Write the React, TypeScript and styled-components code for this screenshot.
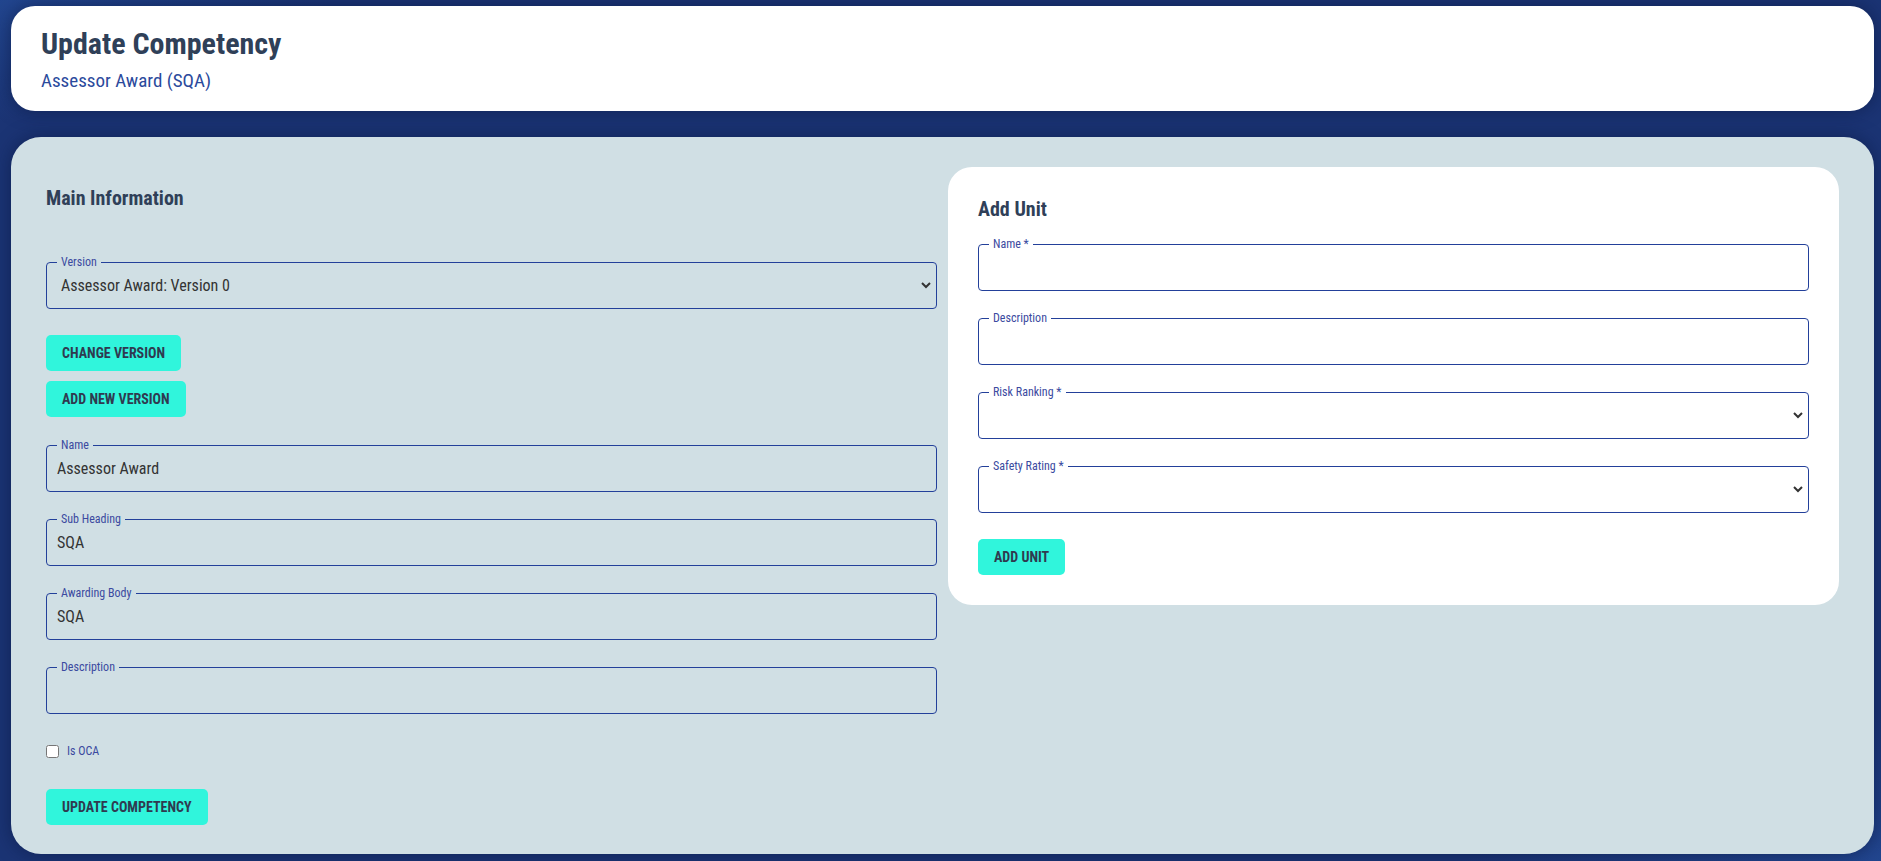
import React from 'react';
import styled, { createGlobalStyle } from 'styled-components';

const GlobalStyle = createGlobalStyle`
  html, body {
    margin: 0;
    padding: 0;
  }
  body {
    font-family: "Roboto Condensed", Roboto, "Liberation Sans", sans-serif;
    font-stretch: condensed;
    background: linear-gradient(160deg, #22468f 0%, #1b3474 8%, #1b3474 90%, #22468f 100%);
    min-height: 100vh;
  }
`;

const Page = styled.div`
  display: flex;
  flex-direction: column;
  gap: 26px;
  padding: 6px 7px 8px 11px;
  box-sizing: border-box;
  min-height: 100vh;
`;

const Header = styled.header`
  background: #fff;
  border-radius: 24px;
  padding: 20px 30px 19px;
  box-shadow: 0 0 18px rgba(8, 20, 60, 0.55);
`;

const Title = styled.h1`
  margin: 0;
  font-size: 30px;
  line-height: 36px;
  font-weight: 700;
  color: #2f4058;
`;

const Subtitle = styled.div`
  margin-top: 7px;
  font-size: 19px;
  line-height: 23px;
  color: #2b4a9c;
`;

const Panel = styled.main`
  flex: 1;
  background: #d0dfe4;
  border-radius: 30px;
  padding: 30px 35px 29px;
  display: grid;
  grid-template-columns: 1fr 1fr;
  gap: 11px;
  align-items: start;
  box-shadow: 0 0 18px rgba(8, 20, 60, 0.55);
`;

const Column = styled.section`
  display: flex;
  flex-direction: column;
  align-items: flex-start;
`;

const Card = styled(Column)`
  background: #fff;
  border-radius: 24px;
  padding: 30px;
`;

const SectionTitle = styled.h2<{ $gap: number; $top?: number }>`
  margin: ${p => p.$top ?? 0}px 0 ${p => p.$gap}px;
  font-size: 20px;
  line-height: 24px;
  font-weight: 700;
  color: #2f4058;
`;

const Field = styled.fieldset<{ $gap?: number }>`
  align-self: stretch;
  margin: 0 0 ${p => p.$gap ?? 20}px;
  padding: 0 10px 6px;
  border: 1px solid #23409a;
  border-radius: 4px;
  min-width: 0;
`;

const Legend = styled.legend`
  padding: 0 4px;
  font-size: 12px;
  line-height: 14px;
  color: #3b4aa0;
`;

const Input = styled.input`
  display: block;
  box-sizing: border-box;
  width: 100%;
  height: 33px;
  border: 0;
  padding: 0;
  background: transparent;
  font: inherit;
  font-size: 16px;
  color: #333;
  outline: none;
`;

const Select = styled.select`
  display: block;
  box-sizing: border-box;
  width: calc(100% + 8px);
  margin-right: -8px;
  height: 33px;
  border: 0;
  padding: 0;
  background: transparent;
  font: inherit;
  font-size: 16px;
  color: #333;
  outline: none;
`;

const Button = styled.button<{ $gap?: number }>`
  margin: 0 0 ${p => p.$gap ?? 0}px;
  height: 36px;
  padding: 0 16px;
  border: 0;
  border-radius: 5px;
  background: #30f5dc;
  color: #2f3a50;
  font: inherit;
  font-size: 14px;
  font-weight: 700;
  text-transform: uppercase;
  cursor: pointer;
`;

const CheckRow = styled.label`
  display: flex;
  align-items: center;
  gap: 8px;
  margin: 30px 0 31px;
  font-size: 12px;
  line-height: 14px;
  color: #3b4aa0;
`;

const Check = styled.input`
  margin: 0;
  width: 13px;
  height: 13px;
`;

const TextField = ({ label, value, gap }: { label: string, value?: string, gap?: number }) => (
  <Field $gap={gap}>
    <Legend>{label}</Legend>
    <Input defaultValue={value} />
  </Field>
);

const SelectField = ({ label, options, gap }: { label: string, options: string[], gap?: number }) => (
  <Field $gap={gap}>
    <Legend>{label}</Legend>
    <Select defaultValue={options[0]}>
      {options.map(o => <option key={o}>{o}</option>)}
    </Select>
  </Field>
);

const App = () => {
  return (
    <>
      <GlobalStyle />
      <Page>
        <Header>
          <Title>Update Competency</Title>
          <Subtitle>Assessor Award (SQA)</Subtitle>
        </Header>
        <Panel>
          <Column>
            <SectionTitle $top={19} $gap={45}>Main Information</SectionTitle>
            <SelectField label="Version" options={['Assessor Award: Version 0']} gap={26} />
            <Button $gap={10}>Change Version</Button>
            <Button $gap={21}>Add New Version</Button>
            <TextField label="Name" value="Assessor Award" />
            <TextField label="Sub Heading" value="SQA" />
            <TextField label="Awarding Body" value="SQA" />
            <TextField label="Description" gap={0} />
            <CheckRow>
              <Check type="checkbox" />
              Is OCA
            </CheckRow>
            <Button>Update Competency</Button>
          </Column>
          <Card>
            <SectionTitle $gap={16}>Add Unit</SectionTitle>
            <TextField label="Name *" />
            <TextField label="Description" />
            <SelectField label="Risk Ranking *" options={['']} />
            <SelectField label="Safety Rating *" options={['']} gap={26} />
            <Button>Add Unit</Button>
          </Card>
        </Panel>
      </Page>
    </>
  );
};

export default App;
